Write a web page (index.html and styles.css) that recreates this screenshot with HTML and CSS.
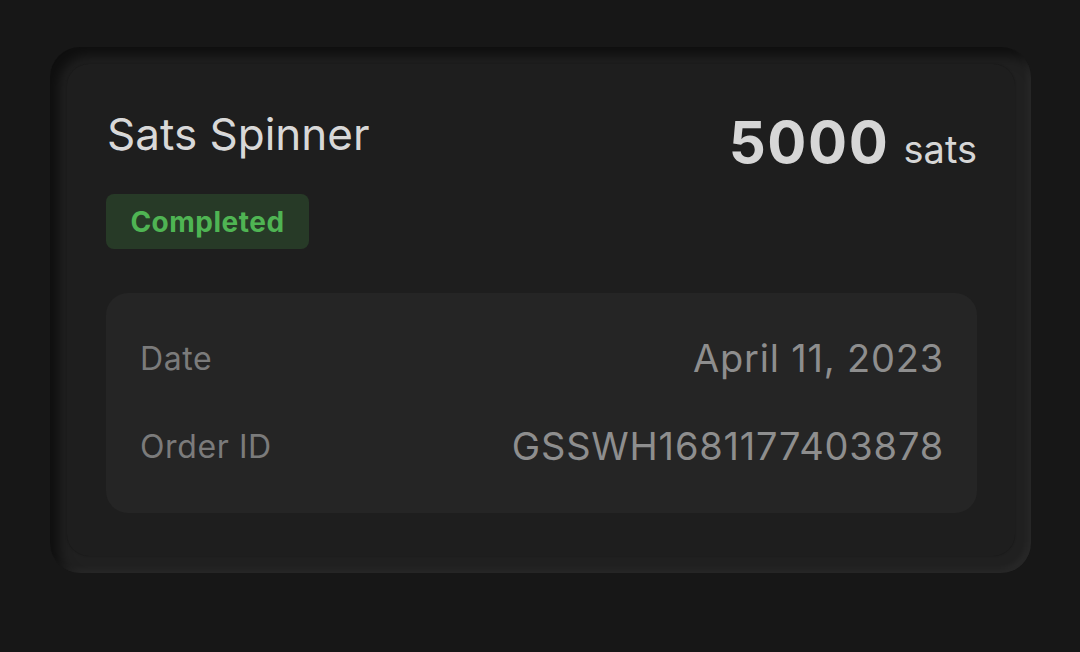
FILE: index.html
```html
<!DOCTYPE html>
<html lang="en">
<head>
<meta charset="utf-8">
<title>Order</title>
<link rel="stylesheet" href="styles.css">
</head>
<body>
  <div class="frame">
    <div class="card">
      <div class="header">
        <div class="header-left">
          <div class="title">Sats Spinner</div>
          <div class="badge">Completed</div>
        </div>
        <div class="amount"><span class="amount-num">5000</span><span class="amount-unit">sats</span></div>
      </div>
      <div class="details">
        <div class="row">
          <span class="label">Date</span>
          <span class="value">April 11, 2023</span>
        </div>
        <div class="row">
          <span class="label">Order ID</span>
          <span class="value">GSSWH1681177403878</span>
        </div>
      </div>
    </div>
  </div>
</body>
</html>
```
FILE: styles.css
```css
html, body {
  margin: 0;
  padding: 0;
  background: #171717;
  font-family: Inter, "Noto Sans", sans-serif;
}

body {
  padding: 47px 49px 0 50px;
  height: 652px;
  box-sizing: border-box;
}

.frame {
  width: 981px;
  height: 526px;
  box-sizing: border-box;
  padding: 17px 16px 17px 17px;
  border-radius: 30px;
  background: #202020;
  box-shadow: inset 9px 9px 12px rgba(0, 0, 0, 0.55),
              inset -4px -4px 7px rgba(255, 255, 255, 0.04);
}

.card {
  height: 100%;
  box-sizing: border-box;
  background: #1e1e1e;
  border-radius: 22px;
  padding: 45px 38px 0 39px;
  box-shadow: 0 0 2px rgba(0, 0, 0, 0.35);
}

.header {
  display: flex;
  justify-content: space-between;
  align-items: flex-start;
}

.title {
  font-size: 44px;
  line-height: 50px;
  color: #d8d8d8;
  padding-left: 1px;
}

.badge {
  margin-top: 35px;
  width: 203px;
  height: 55px;
  box-sizing: border-box;
  display: flex;
  align-items: center;
  justify-content: center;
  border-radius: 8px;
  background: #273a27;
  color: #4fb453;
  font-size: 28px;
  font-weight: 700;
  letter-spacing: 0.5px;
}

.amount {
  display: flex;
  align-items: baseline;
  gap: 14px;
  color: #d6d6d6;
  padding-top: 1px;
}

.amount-num {
  font-size: 58px;
  line-height: 64px;
  font-weight: 700;
  letter-spacing: 1.6px;
}

.amount-unit {
  font-size: 38px;
}

.details {
  margin-top: 44px;
  background: #252525;
  border-radius: 22px;
  padding: 21px 33px 23px 34px;
}

.row {
  height: 88px;
  display: flex;
  align-items: center;
  justify-content: space-between;
}

.label {
  font-size: 32px;
  letter-spacing: 0.6px;
  color: #7b7b7b;
}

.value {
  font-size: 38px;
  letter-spacing: 0.8px;
  color: #8e8e8e;
}
```
